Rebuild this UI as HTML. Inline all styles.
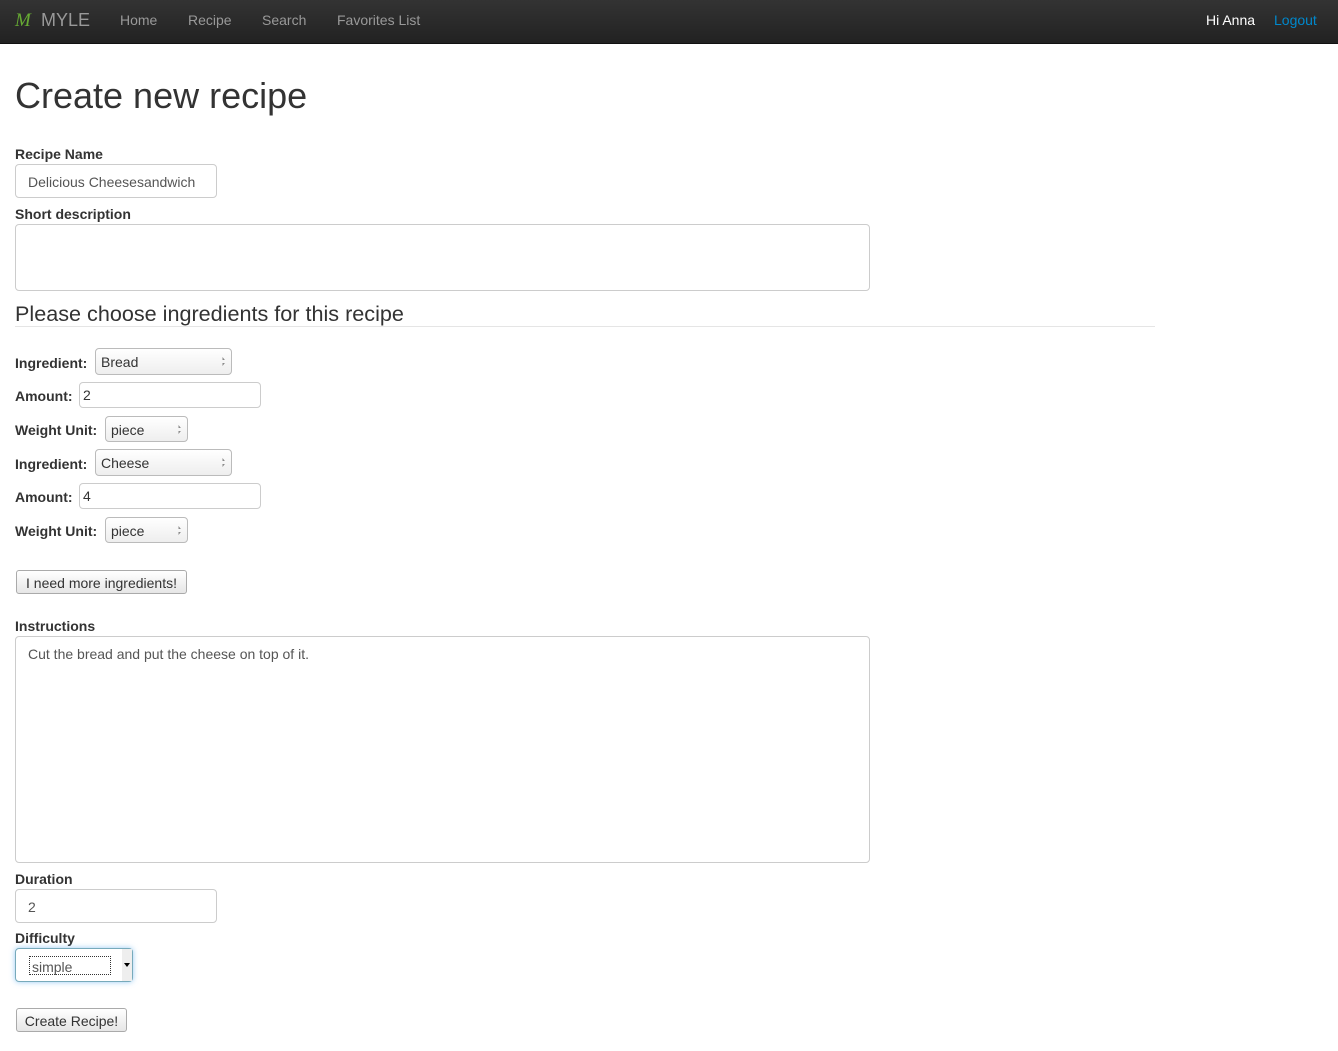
<!DOCTYPE html>
<html><head><style>
body{margin:0;width:1338px;height:1051px;background:#fff;font-family:"Liberation Sans",sans-serif;font-size:14px;color:#333;position:relative;overflow:hidden}
.a{position:absolute;white-space:nowrap}
.nav{position:absolute;left:0;top:0;width:1338px;height:43px;background:linear-gradient(#333,#222);border-bottom:1px solid #111}
.nav .a{color:#999;font-size:14px;top:12px}
b{font-weight:bold;color:#333}
.inp{position:absolute;border:1px solid #ccc;border-radius:4px;background:#fff;box-sizing:border-box;font-size:14px;color:#555}
.sel{position:absolute;border:1px solid #bbb;border-radius:4px;background:linear-gradient(#fff,#eee);box-sizing:border-box;font-size:14px;color:#333}
.sel:after{content:"";position:absolute;right:6px;top:8px;width:5px;height:9px;background:linear-gradient(#888 0 35%,transparent 35% 65%,#888 65%);clip-path:polygon(50% 0,100% 35%,0 35%,0 65%,100% 65%,50% 100%)}
.btn{position:absolute;border:1px solid #aaa;border-radius:3px;background:linear-gradient(#fff,#e6e6e6);box-sizing:border-box;font-size:14px;color:#333;text-align:center}
</style></head><body>
<div class="nav">
<div class="a" style="left:15px;top:10px;color:#6a3;font-family:'Liberation Serif',serif;font-style:italic;font-size:19px">M</div>
<div class="a" style="left:41px;top:10px;font-size:18px;color:#999">MYLE</div>
<div class="a" style="left:120px">Home</div>
<div class="a" style="left:188px">Recipe</div>
<div class="a" style="left:262px">Search</div>
<div class="a" style="left:337px">Favorites List</div>
<div class="a" style="left:1206px;color:#fff">Hi Anna</div>
<div class="a" style="left:1274px;color:#08c">Logout</div>
</div>
<div class="a" style="left:15px;top:75px;font-size:36px;color:#333">Create new recipe</div>
<b class="a" style="left:15px;top:146px">Recipe Name</b>
<div class="inp" style="left:15px;top:164px;width:202px;height:34px;padding:9px 12px">Delicious Cheesesandwich</div>
<b class="a" style="left:15px;top:206px">Short description</b>
<div class="inp" style="left:15px;top:224px;width:855px;height:67px"></div>
<div class="a" style="left:15px;top:301px;font-size:21.6px;color:#333">Please choose ingredients for this recipe</div>
<div class="a" style="left:15px;top:326px;width:1140px;border-top:1px solid #e5e5e5"></div>

<b class="a" style="left:15px;top:355px">Ingredient:</b>
<div class="sel" style="left:95px;top:348px;width:137px;height:27px;padding:5px 5px">Bread</div>
<b class="a" style="left:15px;top:388px">Amount:</b>
<div class="inp" style="left:79px;top:382px;width:182px;height:26px;padding:4px 3px;color:#333">2</div>
<b class="a" style="left:15px;top:422px">Weight Unit:</b>
<div class="sel" style="left:105px;top:416px;width:83px;height:26px;padding:5px 5px">piece</div>

<b class="a" style="left:15px;top:456px">Ingredient:</b>
<div class="sel" style="left:95px;top:449px;width:137px;height:27px;padding:5px 5px">Cheese</div>
<b class="a" style="left:15px;top:489px">Amount:</b>
<div class="inp" style="left:79px;top:483px;width:182px;height:26px;padding:4px 3px;color:#333">4</div>
<b class="a" style="left:15px;top:523px">Weight Unit:</b>
<div class="sel" style="left:105px;top:517px;width:83px;height:26px;padding:5px 5px">piece</div>

<div class="btn" style="left:16px;top:570px;width:171px;height:24px;padding-top:4px">I need more ingredients!</div>

<b class="a" style="left:15px;top:618px">Instructions</b>
<div class="inp" style="left:15px;top:636px;width:855px;height:227px;padding:9px 12px">Cut the bread and put the cheese on top of it.</div>
<b class="a" style="left:15px;top:871px">Duration</b>
<div class="inp" style="left:15px;top:889px;width:202px;height:34px;padding:9px 12px">2</div>
<b class="a" style="left:15px;top:930px">Difficulty</b>
<div class="inp" style="left:15px;top:948px;width:118px;height:34px;border-color:#7ab;box-shadow:0 0 6px rgba(82,168,236,.6)">
<div class="a" style="left:13px;top:7px;width:78px;height:17px;border:1px dotted #333;padding-left:2px;color:#555;line-height:20px">simple</div>
<div class="a" style="right:0;top:0;width:10px;height:32px;background:#eee"></div>
<div class="a" style="right:2px;top:14px;border:3px solid transparent;border-top:4px solid #000;border-bottom:0"></div>
</div>
<div class="btn" style="left:16px;top:1008px;width:111px;height:24px;padding-top:4px">Create Recipe!</div>
</body></html>
